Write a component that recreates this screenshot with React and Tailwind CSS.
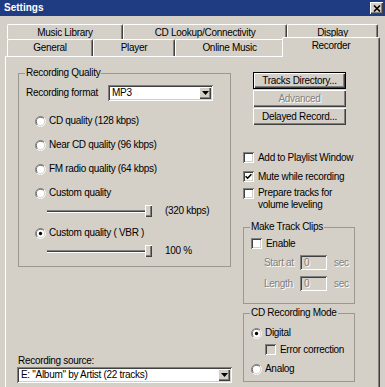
import React from "react";

const RAISED = "shadow-[inset_1px_1px_0_#fff,inset_-1px_-1px_0_#404040,inset_-2px_-2px_0_#808080]";
const SUNKEN = "shadow-[inset_1px_1px_0_#808080,inset_-1px_-1px_0_#fff,inset_2px_2px_0_#404040,inset_-2px_-2px_0_#d4d0c8]";
const DIS = "text-[#808080] [text-shadow:1px_1px_0_#fff]";

function Radio({ checked }) {
  return (
    <svg width="11" height="11" viewBox="0 0 12 12" className="shrink-0">
      <path d="M2.11 9.89A5.5 5.5 0 0 1 9.89 2.11" fill="none" stroke="#808080" />
      <path d="M9.89 2.11A5.5 5.5 0 0 1 2.11 9.89" fill="none" stroke="#fff" />
      <path d="M2.82 9.18A4.5 4.5 0 0 1 9.18 2.82" fill="none" stroke="#404040" />
      <path d="M9.18 2.82A4.5 4.5 0 0 1 2.82 9.18" fill="none" stroke="#d4d0c8" />
      <circle cx="6" cy="6" r="4" fill="#fff" />
      {checked && <circle cx="6" cy="6" r="1.8" fill="#000" />}
    </svg>
  );
}

function Check({ checked, gray }) {
  return (
    <div
      className={`w-[11px] h-[11px] shrink-0 ${gray ? "bg-[#d4d0c8]" : "bg-white"} ${SUNKEN} flex items-center justify-center`}
    >
      {checked && (
        <svg width="7" height="7" viewBox="0 0 7 7">
          <path d="M0.6 3.2 L2.6 5.2 L6.4 1.2" fill="none" stroke="#000" strokeWidth="1.6" />
        </svg>
      )}
    </div>
  );
}

function Combo({ text, className = "" }) {
  return (
    <div className={`h-[16px] bg-white ${SUNKEN} flex items-center pl-[4px] pr-[2px] ${className}`}>
      <span className="flex-1 truncate">{text}</span>
      <div className={`w-[12px] h-[12px] bg-[#d4d0c8] ${RAISED} flex items-center justify-center`}>
        <svg width="7" height="4" viewBox="0 0 7 4">
          <path d="M0 0h7L3.5 4z" fill="#000" />
        </svg>
      </div>
    </div>
  );
}

function RadioRow({ label, checked, className = "", pl = "pl-[16px]", gap = "gap-[3px]" }) {
  return (
    <div className={`flex items-center h-[14px] ${pl} ${gap} ${className}`}>
      <Radio checked={checked} />
      <span>{label}</span>
    </div>
  );
}

function CheckRow({ label, checked, gray, className = "" }) {
  return (
    <div className={`flex items-center h-[13px] gap-[4px] ${className}`}>
      <Check checked={checked} gray={gray} />
      <span>{label}</span>
    </div>
  );
}

function Slider({ label, className = "" }) {
  return (
    <div className={`flex items-center h-[14px] pl-[28px] ${className}`}>
      <div className="w-[100px] h-[3px] border-t border-t-[#808080] border-b border-b-white bg-[#404040]" />
      <div className={`w-[7px] h-[12px] -ml-[2px] bg-[#d4d0c8] ${RAISED}`} />
      <span className="ml-[13px]">{label}</span>
    </div>
  );
}

function Group({ title, className = "", children }) {
  return (
    <fieldset className={`border border-[#9c988f] ${className}`}>
      <legend className="ml-[6px] px-[1px] leading-[12px]">{title}</legend>
      {children}
    </fieldset>
  );
}

function Tab({ w, h = "h-[15px]", label, extra = "" }) {
  return (
    <div
      className={`${w} ${h} shrink-0 bg-[#d4d0c8] border-t border-l border-white border-r border-r-[#404040] shadow-[inset_-1px_0_0_#808080] rounded-t-[2px] flex justify-center pt-[2px] ${extra}`}
    >
      {label}
    </div>
  );
}

function Btn({ children, def, disabled }) {
  return (
    <div
      className={`h-[17px] bg-[#d4d0c8] ${RAISED} ${def ? "border border-black" : ""} flex items-center justify-center ${disabled ? DIS : ""}`}
    >
      {children}
    </div>
  );
}

function Field({ label }) {
  return (
    <div className="flex items-center h-[15px] pl-[20px]">
      <span className={`w-[36px] ${DIS}`}>{label}</span>
      <div className={`w-[27px] h-[15px] bg-[#d4d0c8] ${SUNKEN} pl-[4px] flex items-center ${DIS}`}>0</div>
      <span className={`ml-[7px] ${DIS}`}>sec</span>
    </div>
  );
}

export default function App() {
  return (
    <div className="w-[385px] h-[387px] overflow-hidden bg-[#d4d0c8] font-['Liberation_Sans',Arial,sans-serif] text-[10px] tracking-[-0.3px] leading-[12px] text-black">
      {/* Title bar */}
      <div className="h-[16px] bg-[#1f3b82] flex items-center justify-between pl-[4px] pr-[2px]">
        <span className="text-white font-bold tracking-normal">Settings</span>
        <div className={`w-[13px] h-[12px] bg-[#d4d0c8] ${RAISED} flex items-center justify-center`}>
          <svg width="8" height="7" viewBox="0 0 8 7">
            <path d="M1 0.5 L7 6.5 M7 0.5 L1 6.5" stroke="#000" strokeWidth="1.6" />
          </svg>
        </div>
      </div>

      {/* Tabs */}
      <div className="pt-[8px] pl-[7px]">
        <div className="flex">
          <Tab w="w-[116px]" label="Music Library" />
          <Tab w="w-[164px]" label="CD Lookup/Connectivity" />
          <Tab w="w-[91px]" label="Display" />
        </div>
        <div className="flex items-end h-[17px]">
          <Tab w="w-[86px]" h="h-[17px]" label="General" />
          <Tab w="w-[82px]" h="h-[17px]" label="Player" />
          <Tab w="w-[109px]" h="h-[17px]" label="Online Music" />
          <Tab w="w-[98px]" h="h-[20px]" label="Recorder" extra="-ml-[2px] -mb-[1px] relative z-10" />
        </div>
      </div>

      {/* Panel */}
      <div className="ml-[5px] w-[375px] h-[340px] border-t border-l border-white border-r border-r-[#404040] shadow-[inset_-1px_0_0_#808080] flex">
        {/* Left column */}
        <div className="ml-[12px] w-[213px] flex flex-col">
          <Group title="Recording Quality" className="mt-[10px] w-[213px] pb-[8px]">
            <div className="flex items-center mt-[6px] pl-[7px] h-[16px]">
              <span className="w-[82px]">Recording format</span>
              <Combo text="MP3" className="w-[105px]" />
            </div>
            <RadioRow className="mt-[13px]" label="CD quality (128 kbps)" />
            <RadioRow className="mt-[10px]" label="Near CD quality (96 kbps)" />
            <RadioRow className="mt-[10px]" label="FM radio quality (64 kbps)" />
            <RadioRow className="mt-[10px]" label="Custom quality" />
            <Slider className="mt-[4px]" label="(320 kbps)" />
            <RadioRow className="mt-[8px]" checked label="Custom quality ( VBR )" />
            <Slider className="mt-[4px]" label="100 %" />
          </Group>
          <div className="mt-[88px]">Recording source:</div>
          <Combo className="-ml-[1px] w-[215px]" text={'E: "Album" by Artist (22 tracks)'} />
        </div>

        {/* Right column */}
        <div className="ml-[12px] w-[112px] flex flex-col">
          <div className="mt-[15px] ml-[10px] w-[93px] flex flex-col gap-[1px]">
            <Btn def>Tracks Directory...</Btn>
            <Btn disabled>Advanced</Btn>
            <Btn>Delayed Record...</Btn>
          </div>
          <CheckRow className="mt-[26px]" label="Add to Playlist Window" />
          <CheckRow className="mt-[6px]" checked label="Mute while recording" />
          <div className="flex items-start gap-[4px] mt-[4px]">
            <div className="mt-[1px]">
              <Check />
            </div>
            <span>
              Prepare tracks for
              <br />
              volume leveling
            </span>
          </div>

          <Group title="Make Track Clips" className="mt-[10px] w-[112px] pb-[12px]">
            <div className="mt-[4px] pl-[7px]">
              <CheckRow label="Enable" />
            </div>
            <div className="mt-[5px]">
              <Field label="Start at" />
            </div>
            <div className="mt-[6px]">
              <Field label="Length" />
            </div>
          </Group>

          <Group title="CD Recording Mode" className="mt-[3px] w-[112px] pb-[5px]">
            <RadioRow className="mt-[7px]" pl="pl-[7px]" checked label="Digital" />
            <div className="mt-[3px] pl-[21px]">
              <CheckRow gray label="Error correction" />
            </div>
            <RadioRow className="mt-[6px]" pl="pl-[7px]" label="Analog" />
          </Group>
        </div>
      </div>
    </div>
  );
}
